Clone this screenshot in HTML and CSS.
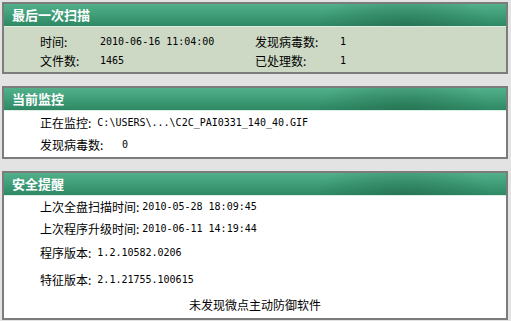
FILE: index.html
```html
<!DOCTYPE html>
<html lang="zh-CN">
<head>
    <meta charset="UTF-8">
    <title>扫描状态</title>
    <link rel="stylesheet" href="styles.css">
</head>
<body>
    <div class="panel scan">
        <div class="panel-head">最后一次扫描</div>
        <div class="panel-body">
            <div class="grid">
                <span class="label">时间:</span><span class="val">2010-06-16 11:04:00</span>
                <span class="label">发现病毒数:</span><span class="val">1</span>
                <span class="label">文件数:</span><span class="val">1465</span>
                <span class="label">已处理数:</span><span class="val">1</span>
            </div>
        </div>
    </div>

    <div class="panel monitor">
        <div class="panel-head">当前监控</div>
        <div class="panel-body">
            <div class="row r1"><span class="label">正在监控:</span><span class="val">C:\USERS\...\C2C_PAI0331_140_40.GIF</span></div>
            <div class="row r2"><span class="label label-wide">发现病毒数:</span><span class="val">0</span></div>
        </div>
    </div>

    <div class="panel notice">
        <div class="panel-head">安全提醒</div>
        <div class="panel-body">
            <div class="row n1 tight"><span class="label">上次全盘扫描时间:</span><span class="val">2010-05-28 18:09:45</span></div>
            <div class="row n2 tight"><span class="label">上次程序升级时间:</span><span class="val">2010-06-11 14:19:44</span></div>
            <div class="row n3"><span class="label">程序版本:</span><span class="val">1.2.10582.0206</span></div>
            <div class="row n4"><span class="label">特征版本:</span><span class="val">2.1.21755.100615</span></div>
            <div class="row n5 center"><span class="label">未发现微点主动防御软件</span></div>
        </div>
    </div>
</body>
</html>
```

FILE: styles.css
```css
body {
    margin: 0;
    padding: 2px 3px 0 2px;
    background-color: #e3e3e3;
    font-family: "Noto Sans CJK SC", sans-serif;
    font-size: 12px;
    color: #000;
    display: flex;
    flex-direction: column;
    gap: 12px;
}
.panel {
    border: 2px solid #7c7c7c;
    background-color: #fff;
    display: flex;
    flex-direction: column;
}
.panel-head {
    height: 22px;
    line-height: 22px;
    padding-left: 8px;
    color: #fff;
    font-weight: bold;
    font-size: 13px;
    border-bottom: 1px solid #dcefe4;
    background:
        radial-gradient(ellipse 90px 40px at 400px 26px, rgba(30, 100, 70, 0.55), rgba(30, 100, 70, 0) 100%),
        linear-gradient(to bottom, #52b08b 0%, #3f9d78 50%, #2f8864 100%);
}
.scan .panel-body {
    background-color: #cdd9c5;
    height: 45px;
    padding-left: 36px;
}
.grid {
    display: grid;
    grid-template-columns: 60px 155px 85px 40px;
    grid-auto-rows: 19px;
    padding-top: 5px;
    align-items: center;
}
.label {
    white-space: nowrap;
}
.val {
    font-family: "DejaVu Sans Mono", monospace;
    font-size: 10px;
    white-space: nowrap;
}
.monitor .panel-body {
    height: 46px;
    padding-left: 36px;
}
.row {
    display: flex;
    align-items: center;
    height: 22px;
}
.row .label {
    margin-right: 6px;
}
.row.tight .label {
    margin-right: 3px;
}
.row .label-wide {
    width: 82px;
    margin-right: 0;
}
.notice {
    height: 145px;
}
.notice .panel-body {
    padding-left: 36px;
    flex: 1;
}
.n1 {
    height: 21px;
}
.n3 {
    height: 25px;
    margin-top: 1px;
}
.n4 {
    height: 27px;
    padding-top: 1px;
}
.n5 {
    height: 22px;
}
.center .label {
    margin-right: 0;
}
.center {
    justify-content: center;
    padding-right: 36px;
}
```
